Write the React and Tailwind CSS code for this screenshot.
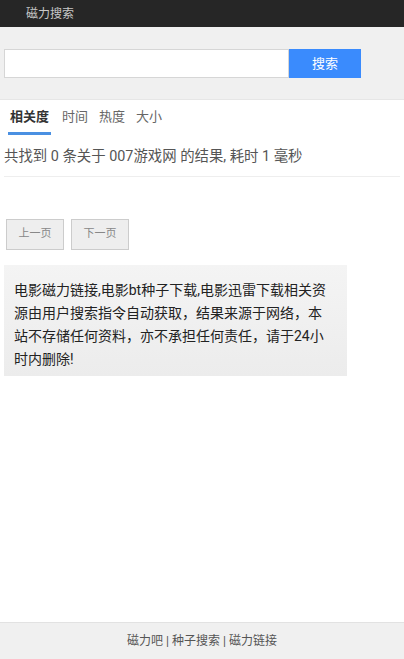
export default function App() {
  const font = { fontFamily: 'Roboto, "Noto Sans CJK SC", sans-serif' };
  return (
    <div className="min-h-[659px] flex flex-col bg-white" style={font}>
      <div className="h-[27px] bg-[#262626] flex items-center pl-[26px] text-[12px] text-[#c8c8c8]">磁力搜索</div>
      <div className="bg-[#f0f0f0] h-[73px] flex items-start pt-[22px] pl-[4px] border-b border-[#e6e6e6]">
        <input className="w-[285px] h-[29px] bg-white border border-[#d6d6d6] outline-none" />
        <button className="w-[72px] h-[29px] bg-[#3a8bfd] text-white text-[13px]">搜索</button>
      </div>
      <div className="flex items-end gap-[11px] h-[35px] pl-[8px] text-[13px] text-[#666]">
        <div className="font-bold text-[#333] border-b-[3px] border-[#4a90e2] pb-[6px] px-[2px]">相关度</div>
        <div className="pb-[9px]">时间</div>
        <div className="pb-[9px]">热度</div>
        <div className="pb-[9px]">大小</div>
      </div>
      <div className="mx-[4px] h-[42px] pt-[3px] flex items-center text-[14.4px] text-[#555] border-b border-[#eee]">
        共找到 0 条关于 007游戏网 的结果, 耗时 1 毫秒
      </div>
      <div className="flex gap-[7px] pl-[6px] mt-[42px]">
        <button className="w-[58px] h-[31px] bg-[#eee] border border-[#ccc] text-[11px] text-[#888]">上一页</button>
        <button className="w-[58px] h-[31px] bg-[#eee] border border-[#ccc] text-[11px] text-[#888]">下一页</button>
      </div>
      <div className="ml-[4px] mt-[15px] w-[343px] h-[111px] bg-gradient-to-b from-[#f4f4f4] to-[#ececec] pl-[10px] pr-[13px] pt-[14px] text-[14px] leading-[23px] text-[#222]">
        电影磁力链接,电影bt种子下载,电影迅雷下载相关资源由用户搜索指令自动获取，结果来源于网络，本站不存储任何资料，亦不承担任何责任，请于24小时内删除!
      </div>
      <div className="flex-1" />
      <div className="h-[37px] bg-[#f0f0f0] border-t border-[#e2e2e2] flex items-center justify-center text-[12px] text-[#555]">
        磁力吧 | 种子搜索 | 磁力链接
      </div>
    </div>
  );
}
